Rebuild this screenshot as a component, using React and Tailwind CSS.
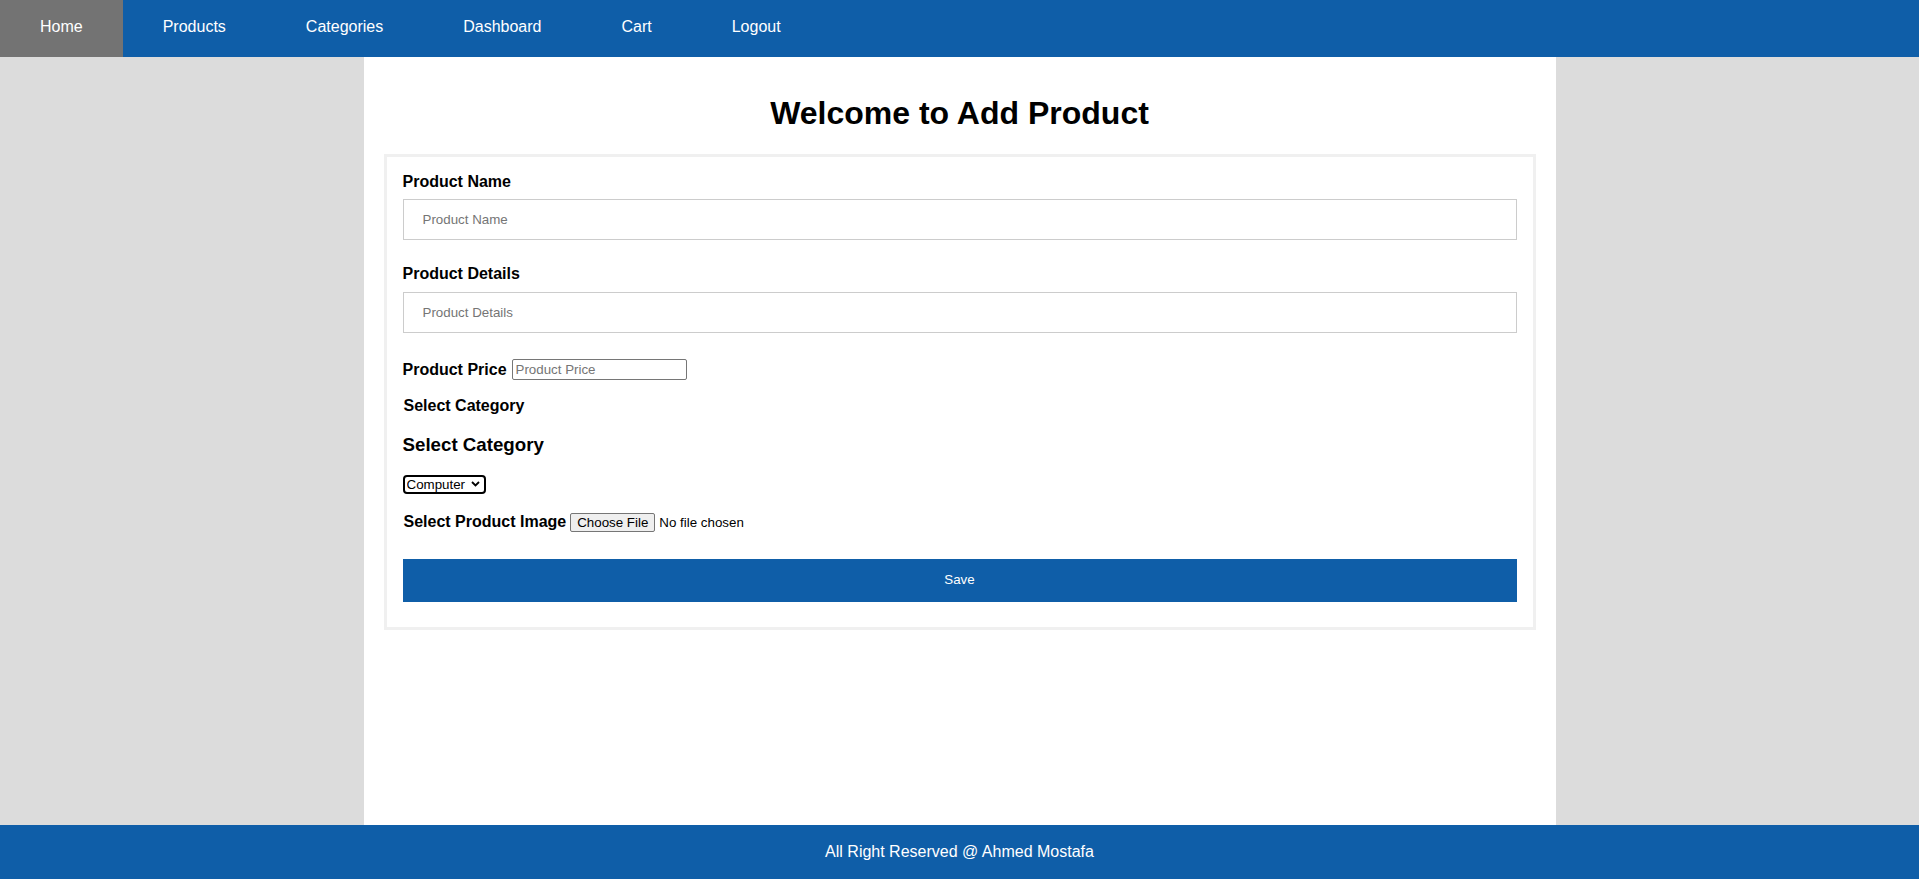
import React, { useState } from 'react';

const navLinks = ['Home', 'Products', 'Categories', 'Dashboard', 'Cart', 'Logout'];

const AddProduct = () => {
  const [category, setCategory] = useState('computer');

  return (
    <div className="min-h-screen flex flex-col font-['Liberation_Sans',Arial,sans-serif] text-black">
      <nav className="h-[57px] flex bg-[#0f5ea8]">
        {navLinks.map((link, i) => (
          <a
            key={link}
            href="#"
            className={`px-10 pt-[18px] text-base leading-[18px] text-white ${
              i === 0 ? 'bg-[#737373]' : ''
            }`}
          >
            {link}
          </a>
        ))}
      </nav>

      <main className="flex-1 flex justify-center bg-[#dcdcdc]">
        <div className="w-[1192px] bg-white">
          <h1 className="mt-[38px] text-center text-[32px] leading-[37px] font-bold">
            Welcome to Add Product
          </h1>

          <form
            className="mx-5 mt-[22px] border-[3px] border-[#f0f0f0] px-4 pt-[16px] pb-[25px]"
            onSubmit={(e) => e.preventDefault()}
          >
            <label htmlFor="name" className="block text-base leading-[18px] font-bold">
              Product Name
            </label>
            <input
              id="name"
              type="text"
              placeholder="Product Name"
              className="mt-[8px] block w-full h-[41px] border border-[#cccccc] px-[19px] text-[13.33px] placeholder:text-[#757575] outline-none"
            />

            <label htmlFor="details" className="mt-[25px] block text-base leading-[18px] font-bold">
              Product Details
            </label>
            <input
              id="details"
              type="text"
              placeholder="Product Details"
              className="mt-[9px] block w-full h-[41px] border border-[#cccccc] px-[19px] text-[13.33px] placeholder:text-[#757575] outline-none"
            />

            <div className="mt-[26px] flex items-center gap-[5px]">
              <label htmlFor="price" className="text-base leading-[18px] font-bold">
                Product Price
              </label>
              <input
                id="price"
                type="text"
                placeholder="Product Price"
                className="w-[175px] h-[21px] border border-[#767676] rounded-[2px] px-[3px] text-[13.33px] placeholder:text-[#757575] outline-none"
              />
            </div>

            <p className="mt-[17px] pl-px text-base leading-[18px] font-bold">Select Category</p>
            <h3 className="mt-[18.5px] text-[18.72px] leading-[21.5px] font-bold">Select Category</h3>

            <div className="mt-[19.5px] inline-flex items-center h-[19px] border-2 border-black rounded-[4px] pl-[2px] pr-[4px]">
              <select
                value={category}
                onChange={(e) => setCategory(e.target.value)}
                className="appearance-none text-[13.33px] leading-[15px] outline-none"
              >
                <option value="computer">Computer</option>
                <option value="mobile">Mobile</option>
              </select>
              <svg width="9" height="6" viewBox="0 0 9 6" className="ml-[5px]">
                <path d="M1 1l3.5 3.5L8 1" fill="none" stroke="black" strokeWidth="1.8" />
              </svg>
            </div>

            <div className="mt-[17px] flex items-center gap-[4px]">
              <label htmlFor="image" className="pl-px text-base leading-[18px] font-bold">
                Select Product Image
              </label>
              <input
                id="image"
                type="file"
                className="text-[13.33px] leading-[15px] file:border file:border-solid file:border-[#767676] file:bg-[#efefef] file:rounded-[2px] file:px-[6px] file:py-[1px] file:mr-[4px] file:text-black"
              />
            </div>

            <button
              type="submit"
              className="mt-[27px] block w-full h-[43px] bg-[#0f5ea8] text-white text-[13.33px]"
            >
              Save
            </button>
          </form>
        </div>
      </main>

      <footer className="h-[54px] flex items-center justify-center bg-[#0f5ea8] text-base text-white">
        All Right Reserved @ Ahmed Mostafa
      </footer>
    </div>
  );
};

export default AddProduct;
